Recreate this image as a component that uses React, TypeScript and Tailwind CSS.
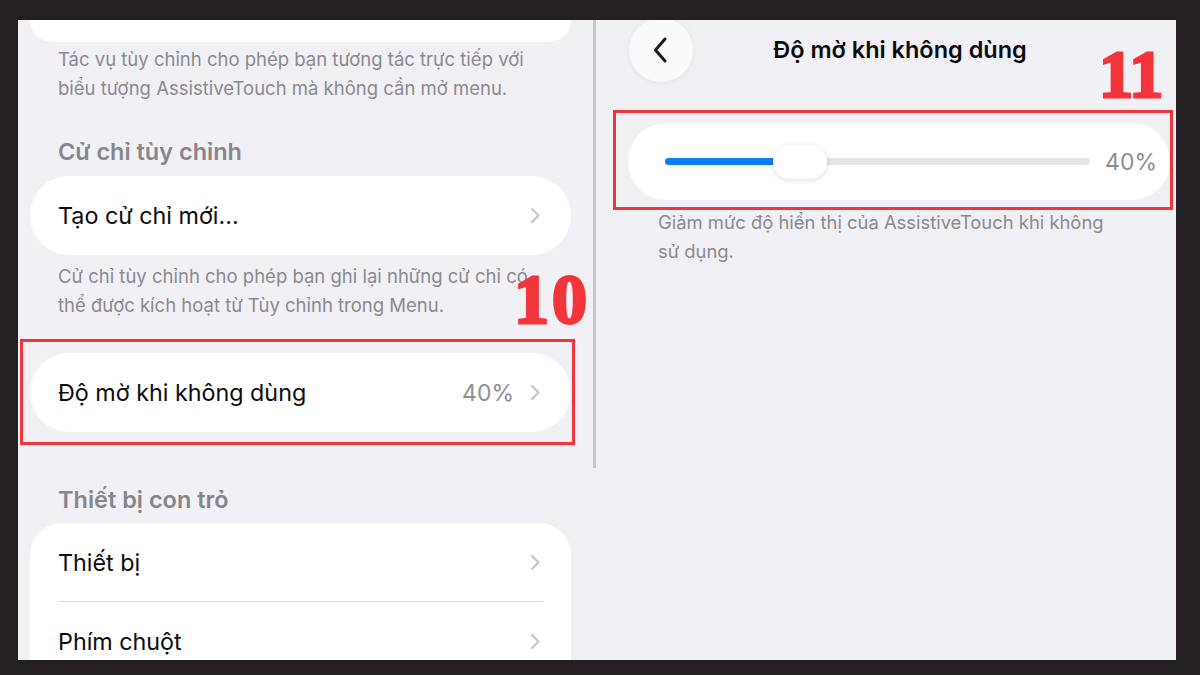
import React from "react";

const FONT = { fontFamily: "Inter, 'Noto Sans', sans-serif" };
const BADGE = { fontFamily: "'Liberation Serif', 'Times New Roman', serif" };

function Chevron() {
  return (
    <svg width="11" height="17" viewBox="0 0 11 17" className="shrink-0">
      <path d="M2 2 L8.5 8.5 L2 15" fill="none" stroke="#c4c4c7" strokeWidth="2" strokeLinecap="round" strokeLinejoin="round" />
    </svg>
  );
}

function Row({ label, value, divider }: { label: string; value?: string; divider?: boolean }) {
  return (
    <div className="relative flex h-[79px] items-center pl-[28px] pr-[30px]">
      <span className="flex-1 text-[23.3px] leading-[28px] text-[#0c0c0e]">{label}</span>
      {value && <span className="mr-[16px] text-[23px] leading-[28px] text-[#8e8e93]">{value}</span>}
      <Chevron />
      {divider && <div className="absolute bottom-0 left-[28px] right-[28px] h-px bg-[#dcdce0]" />}
    </div>
  );
}

function Note({ lines }: { lines: string[] }) {
  return (
    <div className="pl-[28px] text-[18.5px] leading-[29px] text-[#8a8a8e]">
      {lines.map((l) => (
        <div key={l}>{l}</div>
      ))}
    </div>
  );
}

function Header({ text }: { text: string }) {
  return <div className="pl-[28px] text-[23.5px] font-semibold leading-[28px] text-[#86868b]">{text}</div>;
}

function LeftPanel() {
  return (
    <div className="relative h-full w-[575px] overflow-hidden bg-[#f1f0f5] pl-[12px] pr-[22px]">
      <div className="h-[22px] rounded-b-[26px] bg-white" />
      <div className="mt-[3px]">
        <Note lines={["Tác vụ tùy chỉnh cho phép bạn tương tác trực tiếp với", "biểu tượng AssistiveTouch mà không cần mở menu."]} />
      </div>
      <div className="mt-[35px]">
        <Header text="Cử chỉ tùy chỉnh" />
      </div>
      <div className="mt-[10px] rounded-[40px] bg-white">
        <Row label="Tạo cử chỉ mới..." />
      </div>
      <div className="mt-[7px]">
        <Note lines={["Cử chỉ tùy chỉnh cho phép bạn ghi lại những cử chỉ có", "thể được kích hoạt từ Tùy chỉnh trong Menu."]} />
      </div>
      <div className="relative mt-[33px] rounded-[40px] bg-white">
        <Row label="Độ mờ khi không dùng" value="40%" />
        <div className="pointer-events-none absolute -bottom-[13px] -left-[10px] -right-[4px] -top-[14px] border-[3px] border-[#f2353a]" />
      </div>
      <div className="mt-[54px]">
        <Header text="Thiết bị con trỏ" />
      </div>
      <div className="mt-[9px] rounded-t-[32px] bg-white">
        <Row label="Thiết bị" divider />
        <Row label="Phím chuột" />
      </div>
      <span
        className="absolute left-[496px] top-[245px] text-[70px] font-bold leading-none tracking-[3px] text-[#f2353a] [-webkit-text-stroke:3px_#f2353a]"
        style={BADGE}
      >
        10
      </span>
    </div>
  );
}

function RightPanel() {
  return (
    <div className="relative h-full flex-1 overflow-hidden bg-[#f1f0f5]">
      <div className="-mt-[2px] flex items-center pl-[33px] pr-[69px]">
        <div className="flex h-[64px] w-[64px] items-center justify-center rounded-full bg-[#fafafc] shadow-[0_1px_6px_rgba(0,0,0,0.06)]">
          <svg width="18" height="28" viewBox="0 0 18 28">
            <path d="M13 3 L3.5 14 L13 25" fill="none" stroke="#1c1c1e" strokeWidth="3" strokeLinecap="round" strokeLinejoin="round" />
          </svg>
        </div>
        <div className="flex-1 text-center text-[23.5px] font-semibold leading-[28px] text-[#0c0c0e]">Độ mờ khi không dùng</div>
      </div>
      <div className="relative ml-[32px] mt-[41px] flex h-[77px] w-[542px] items-center rounded-[40px] bg-white pl-[37px] pr-[13px]">
        <div className="relative flex h-[7px] flex-1 items-center rounded-full bg-[#e6e6ea]">
          <div className="h-[7px] w-[130px] rounded-full bg-[#0a7ff5]" />
          <div className="absolute left-[108px] top-1/2 h-[34px] w-[54px] -translate-y-1/2 rounded-full bg-white shadow-[0_1px_6px_rgba(0,0,0,0.14)]" />
        </div>
        <span className="ml-[15px] text-[23px] leading-[28px] text-[#8e8e93]">40%</span>
        <div className="pointer-events-none absolute -bottom-[10px] -left-[15px] -right-[3px] -top-[13px] border-[3px] border-[#f2353a]" />
      </div>
      <div className="ml-[62px] mt-[8px] text-[18.4px] leading-[29px] text-[#8a8a8e]">
        <div>Giảm mức độ hiển thị của AssistiveTouch khi không</div>
        <div>sử dụng.</div>
      </div>
      <span
        className="absolute left-[503px] top-[20px] text-[68px] font-bold leading-none tracking-[0px] text-[#f2353a] [-webkit-text-stroke:3px_#f2353a]"
        style={BADGE}
      >
        11
      </span>
    </div>
  );
}

export default function App() {
  return (
    <div className="h-[675px] w-[1200px] overflow-hidden bg-[#231f22] pb-[15px] pl-[18px] pr-[24px] pt-[20px]" style={FONT}>
      <div className="flex h-full">
        <LeftPanel />
        <div className="flex w-[3px] flex-col bg-[#f1f0f5]">
          <div className="h-[448px] w-[3px] bg-[#c6c6ca]" />
        </div>
        <RightPanel />
      </div>
    </div>
  );
}
